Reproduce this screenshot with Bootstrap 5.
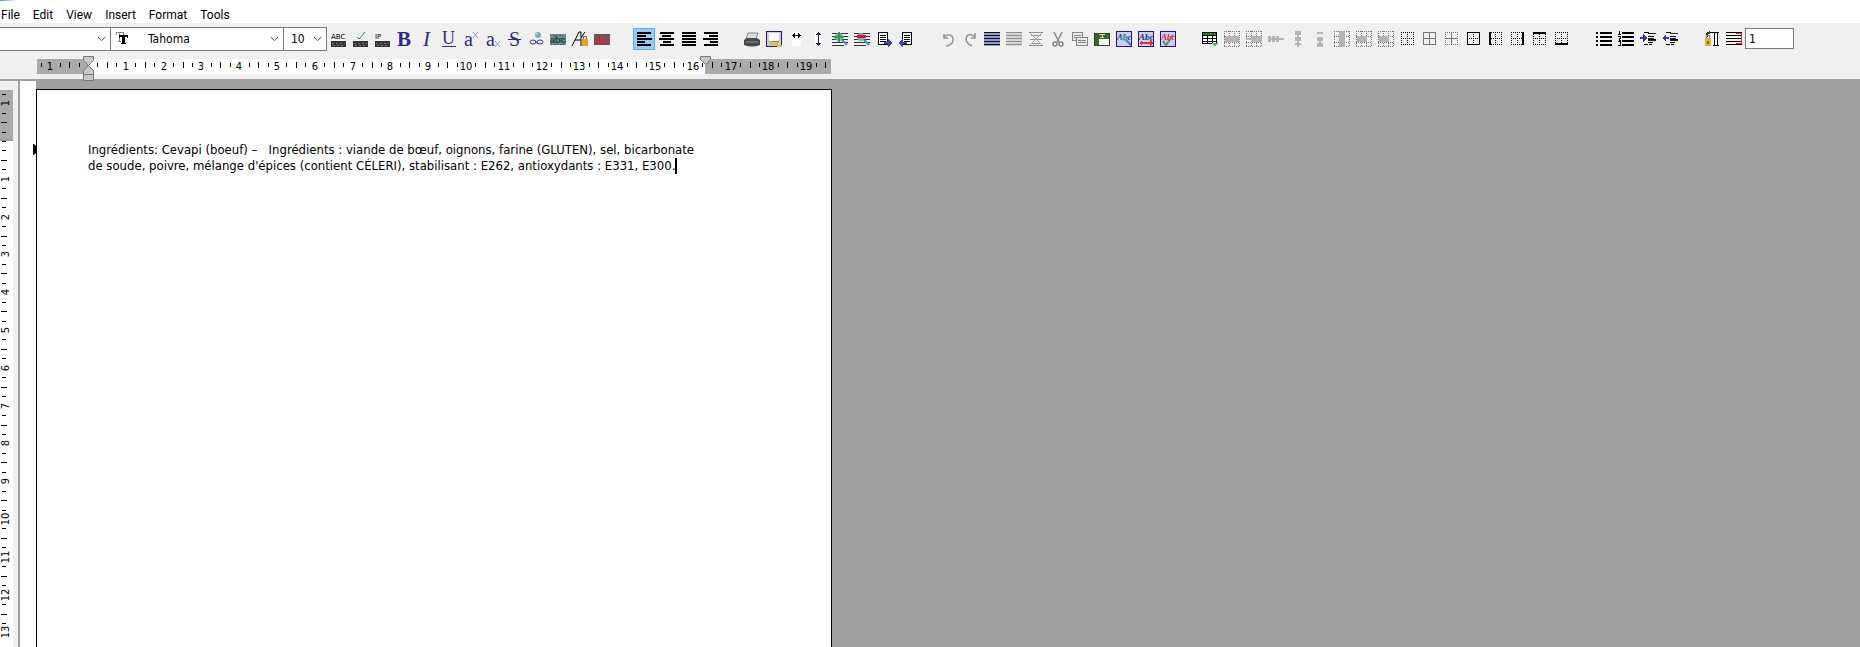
<!DOCTYPE html>
<html lang="fr">
<head>
<meta charset="utf-8">
<meta name="viewport" content="width=device-width, initial-scale=1">
<title>Editor</title>
<link href="https://cdn.jsdelivr.net/npm/bootstrap@5.3.0/dist/css/bootstrap.min.css" rel="stylesheet">
<style>
  :root { --face: #f0f0f0; --shade: #a0a0a0; --edge: #7a7a7a; --tahoma: "DejaVu Sans Condensed", "DejaVu Sans", sans-serif; }
  body { background: var(--shade); color: #000; font: 12px/16px Roboto, "Open Sans", sans-serif; }
  .menubar { height: 23px; padding: 7px 0 0 1px; gap: 13px; }
  .menubar::before { content: ""; position: absolute; top: 0; left: 0; width: 18px; height: 1px; background: linear-gradient(90deg, #4a9be8, #fff); }
  .menubar a { color: #000; line-height: 16px; }
  .chrome { background: var(--face); border-bottom: 2px solid var(--shade); }
  .toolbar-row { height: 33px; padding-top: 4px; }
  .combo { appearance: none; height: 24px; border: 1px solid var(--edge); border-radius: 0; color: #000; font: 12px/16px var(--tahoma);
    background: #fff url("data:image/svg+xml,%3Csvg xmlns='http://www.w3.org/2000/svg' width='9' height='6'%3E%3Cpath d='M.5 .7l4 4 4-4' fill='none' stroke='%23555'/%3E%3C/svg%3E") no-repeat right 4px center; }
  .combo-style { width: 111px; border-left: 0; }
  .combo-font { width: 174px; margin-left: -1px; padding-left: 37px; }
  .combo-size { width: 44px; margin-left: -1px; padding-left: 7px; }
  .font-mark { position: absolute; left: 4px; top: 4px; pointer-events: none; }
  .tools { gap: 20px; padding-top: 1px; }
  .tool { width: 22px; height: 22px; padding: 2px; border: 1px solid transparent; background: none; line-height: 0; }
  .tool:hover, .tool.active { background: #99c9ef; border-color: #56b0fa; }
  .tool svg { width: 16px; height: 16px; overflow: visible; display: block; }
  .page-number { width: 49px; height: 21px; margin-top: 1px; padding: 0 0 0 3px; border: 1px solid var(--edge); font: 12px/16px var(--tahoma); }
  .ruler-row { height: 23px; padding-left: 37px; }
  .ruler { display: block; overflow: visible; font: 11px var(--tahoma); }
  .side-ruler { width: 20px; padding-top: 9px; background: var(--face); border-right: 2px solid var(--shade); }
  .selection-bar { width: 16px; }
  .sheet { width: 796px; margin-top: 8px; border: 1px solid #000; border-bottom: 0; padding: 52px 51px; font: 13px/16px var(--tahoma); }
  .para-mark { position: absolute; left: -4px; top: 54px; }
  .caret { display: inline-block; width: 2px; height: 16px; background: #000; vertical-align: top; }
</style>
</head>
<body class="vh-100 d-flex flex-column overflow-hidden">
<nav class="menubar d-flex bg-white position-relative" aria-label="Menu">
  <a class="text-decoration-none" href="#">File</a>
  <a class="text-decoration-none" href="#">Edit</a>
  <a class="text-decoration-none" href="#">View</a>
  <a class="text-decoration-none" href="#">Insert</a>
  <a class="text-decoration-none" href="#">Format</a>
  <a class="text-decoration-none" href="#">Tools</a>
</nav>
<header class="chrome">
  <div class="toolbar-row d-flex align-items-start">
    <select class="combo combo-style" aria-label="Style"><option></option></select>
    <div class="position-relative">
      <select class="combo combo-font" aria-label="Font"><option>Tahoma</option></select>
      <svg class="font-mark" width="13" height="15" viewBox="0 0 13 15" shape-rendering="crispEdges"><path d="M1.5 4V1.5h7V4M4.5 1v9M3 10.5h3" fill="none" stroke="#888"/><path d="M4 4h9v3h-1V6h-2v6h1v1H6v-1h1V6H5v1H4z"/></svg>
    </div>
    <select class="combo combo-size" aria-label="Font size"><option>10</option></select>
    <div class="tools d-flex" id="tools" role="toolbar" aria-label="Formatting"></div>
    <input class="page-number" aria-label="Level" value="1">
  </div>
  <div class="ruler-row"><svg class="ruler" id="ruler-x" width="794" height="25"></svg></div>
</header>
<main class="d-flex flex-grow-1 overflow-hidden">
  <div class="side-ruler flex-shrink-0 overflow-hidden"><svg class="ruler w-100 h-100" id="ruler-y"></svg></div>
  <div class="selection-bar bg-white flex-shrink-0"></div>
  <article class="sheet bg-white position-relative flex-shrink-0" contenteditable="true" spellcheck="false" aria-label="Document">
    <svg class="para-mark" width="3" height="11"><path d="M0 0h1l2 2v7l-2 2H0z"/></svg>
    <p class="m-0 text-nowrap">Ingrédients: Cevapi (boeuf) – &nbsp; Ingrédients : viande de bœuf, oignons, farine (GLUTEN), sel, bicarbonate<br>de soude, poivre, mélange d'épices (contient CÉLERI), stabilisant : E262, antioxydants : E331, E300.<span class="caret"></span></p>
  </article>
</main>
<script>
  const path = (d, stroke = '#000', extra = '') => `<path d="${d}" fill="none" stroke="${stroke}" ${extra}/>`;
  const fill = (d, color = '#000') => `<path d="${d}" fill="${color}"/>`;
  const glyph = (t, x, y, size, css = '', color = '#312a80') => `<text x="${x}" y="${y}" fill="${color}" style="font:${css} ${size}px 'Liberation Serif',serif">${t}</text>`;
  const dots = 'stroke-dasharray="1 1"';
  const smooth = 'shape-rendering="auto"';

  // Keyboard-like field block
  const field = fill('M0 10h15v6H0z', '#333') + path('M1 12.5h13M2 14.5h12', '#777', 'stroke-dasharray="2 2"');
  const tiny = t => `<text x="0" y="8" style="font:7px 'DejaVu Sans',sans-serif">${t}</text>`;
  const noisy = (bg, ink) => fill('M0 3h16v11H0z', bg) + path('M0 4.5h16M1 7.5h15M0 10.5h16M1 13.5h15', '#555', 'stroke-dasharray="1 2 2 1"') +
    `<text x="0" y="12" fill="${ink}" style="font:bold 9px 'Liberation Sans',sans-serif">abc</text>`;
  const bars = rows => fill(rows.map(([y, x, w]) => `M${x} ${y}h${w}v2H${x}z`).join(''));
  const aligned = kind => bars([1, 4, 7, 10, 13].map((y, i) => {
    const w = kind === 'justify' ? 14 : [14, 9, 15, 8, 14][i];
    return [y, kind === 'left' ? 1 : kind === 'center' ? 9 - Math.ceil(w / 2) : kind === 'right' ? 16 - w : 2, w];
  }));
  const magnifier = (c, sign) => path('M0 2.5h16M0 5.5h16M0 8.5h16M0 11.5h16M0 14.5h12', '#333') + `<circle cx="7" cy="6" r="4" fill="#74afb9" ${smooth}/>` + path('M10 9l5 5', '#3f91bd', 'stroke-width="2" ' + smooth) + fill(sign, c);
  const sheetLines = fill('M1 1h10v13H1z', '#fff') + path('M1.5 1.5h9v12h-9zM3 4.5h6M3 6.5h6M3 8.5h6M3 10.5h6');
  const list = () => [1, 4, 7, 10, 13].map(y => `M0 ${y + .5}h16`).join('');
  const framed = body => fill('M0 0h16v16H0z', '#cbcbff') + body + path('M.5 .5h15v15H.5z', '#2d106f');
  const abc = (c = '#253f58') => glyph('Abc', 1, 9, 9, 'italic bold', c);
  const gridDots = (c = '#000') => path('M1 1.5h13M1 7.5h13M1 13.5h13M1.5 1v13M7.5 1v13M13.5 1v13', c, dots);
  const cells = band => path('M0 .5h16M0 5.5h16M0 11.5h16M0 15.5h16M.5 0v16M5.5 0v16M10.5 0v16M15.5 0v16', '#777', dots) + fill(band, '#b4b4b4');
  const bullets = fill([1, 5, 9, 13].map(y => `M0 ${y}h2v2H0zM4 ${y}h12v2H4z`).join(''));
  const numbers = fill([1, 5, 9, 13].map(y => `M4 ${y}h12v2H4z`).join('')) + path('M1.5 0v4M0 3.5h3M0 5.5h2v2H1v2h2M0 10.5h2v4H0', '#000');
  const indent = path('M4 1.5h5M8 2.5h8M8 5.5h6M8 8.5h8M8 11.5h5M4 13.5h4M9 13.5h3', '#000') + path('M8 2h8M8 7h6M8 9h8', '#222');

  const groups = [
    [
      ['Spelling field', `<g transform="translate(1 0)">${tiny('ABC') + field}</g>`],
      ['Check field', `<g transform="translate(1 0)">${path('M4 6l2 2 6-7', '#2b8b45', smooth) + field}</g>`],
      ['Insert field', `<g transform="translate(1 0)">${tiny('IP') + field}</g>`],
      ['Bold', glyph('B', 1, 15, 21, 'bold')],
      ['Italic', glyph('I', 5, 15, 21, 'italic')],
      ['Underline', glyph('U', 2, 13, 18) + path('M2 15.5h14', '#312a80')],
      ['Superscript', glyph('a', 2, 15, 20) + path('M11 1l5 6M16 1l-5 6', '#9697cd', smooth)],
      ['Subscript', glyph('a', 2, 15, 20) + path('M11 10l5 6M16 10l-5 6', '#9697cd', smooth)],
      ['Strikethrough', glyph('S', 3, 15, 20) + path('M2 8.5h13', '#312a80')],
      ['Hyperlink', `<g ${smooth}><circle cx="10" cy="4" r="3" fill="#6eb1bd"/><circle cx="9" cy="3" r="1" fill="#ded86e"/><ellipse cx="5" cy="11" rx="3" ry="2" fill="none" stroke="#39398c"/><ellipse cx="12" cy="11" rx="3" ry="2" fill="none" stroke="#39398c"/><path d="M6 9l4 4" stroke="#39398c"/></g>`],
      ['Highlight', noisy('#6b8f8f', '#243f45')],
      ['Protect text', path('M0 15L7 1h2v14M3 9h6M9 7l4-6', '#000', smooth) + fill('M10 8h6v7h-6z', '#e5a51f') + path('M11.5 8V5.5h3V8', '#666')],
      ['Hidden text', noisy('#625a5a', '#e3222b')],
    ],
    [
      ['Align left', aligned('left'), 'active'], ['Center', aligned('center')], ['Justify', aligned('justify')], ['Align right', aligned('right')],
    ],
    [
      ['Print', `<g ${smooth}><path d="M4 2h10l-2 6H2z" fill="#ddd" stroke="#888"/><path d="M0 9l3-2h10l3 2v5q-8 3-16 0z" fill="#454b4d"/><path d="M2 11h12" stroke="#8c9292"/></g>`],
      ['Page setup', fill('M0 0h16v16H0z', '#c9c9f8') + path('M.5 .5h15v15H.5z', '#2d106f') + fill('M3 2h10v8H3z', '#fff') + path('M3 10h10', '#777') + path('M4 13h6l2-2m-2 2l2 2h4M5 10v4', '#d8c51f', 'stroke-width="2"')],
      ['Page width', fill('M4 1h9v14H4z', '#fff') + path('M5 4.5h7M6.5 2v5M10.5 2v5') + fill('M4 4.5l3-3v6zM13 4.5l-3-3v6z')],
      ['Page height', fill('M5 1h7v14H5z', '#fff') + path('M8.5 3v10', '#202060') + fill('M8.5 1L6 4h5zM8.5 15L6 12h5z', '#202060')],
      ['Zoom in', magnifier('#2c9d4c', 'M6 1h2v4h4v2H8v4H6V7H2V5h4z')],
      ['Zoom out', magnifier('#cf1534', 'M3 4h9v3H3z')],
      ['Next page', `<g transform="translate(1 0)">${sheetLines + fill('M7 11h4V8l5 4-5 4v-3H7z', '#4040ba')}</g>`],
      ['Previous page', `<g transform="translate(3 0)">${sheetLines}</g>` + fill('M9 11H5V8l-5 4 5 4v-3h4z', '#4040ba')],
    ],
    [
      ['Undo', path('M4 3v4h4M4 6c8-8 15 7 2 9', '#929292', 'stroke-width="1.5" ' + smooth)],
      ['Redo', path('M13 2v5H9M13 6C4-2 0 12 10 15', '#929292', 'stroke-width="1.5" ' + smooth)],
      ['Select rows', fill('M0 1h16v14H0z', '#9999d8') + path(list(), '#111')],
      ['Lines', fill('M0 1h16v14H0z', '#d4d4d4') + path(list(), '#909090')],
      ['Delete lines', path('M1 1.5h14M3 4.5h10M2 8.5h12M3 12.5h10M1 14.5h14', '#929292') + path('M2 2l12 12M14 2L2 14', '#a4a4a4', smooth)],
      ['Cut', `<g fill="none" stroke="#858585" stroke-width="1.5" ${smooth}><path d="M4 1l5 10M12 1L7 11"/><circle cx="5" cy="13" r="2"/><circle cx="11" cy="13" r="2"/></g>`],
      ['Copy', fill('M0 1h11v9H0z', '#e8e8e8') + path('M.5 1.5h10v8H.5zM2 4.5h7M2 6.5h7', '#858585') + fill('M4 6h12v9H4z', '#e8e8e8') + path('M4.5 6.5h11v8h-11zM6 9.5h8M6 11.5h8', '#858585')],
      ['Paste', fill('M0 2h16v13H0z', '#2e6931') + path('M.5 2.5h15v12H.5z', '#29452a') + path('M5 3.5h6M8.5 3v3M6 6.5h4', '#ecd36c') + fill('M5 8h10v6H5z', '#fff')],
      ['Find', framed(abc() + `<circle cx="8" cy="7" r="3" fill="#71b3c1" fill-opacity=".7" ${smooth}/>` + path('M10 9l5 5', '#398cb9', 'stroke-width="2" ' + smooth))],
      ['Replace', framed(abc('#203a45') + fill('M1 12l3-3v2h8V9l3 3-3 3v-2H4v2z', '#dc3032') + path('M10 6l4 3', '#398cb9', 'stroke-width="2"'))],
      ['Check spelling', framed(abc('#fa1b25') + path('M3 10l3 4L13 4', '#71854b', 'stroke-width="2" ' + smooth))],
    ],
    [
      ['Insert table', fill('M0 1h15v12H0z', '#fff') + fill('M0 1h15v3H0z', '#278527') + path('M.5 1.5h14v11H.5zM0 4.5h15M0 7.5h15M0 10.5h15M5.5 4v9M10.5 4v9') + fill('M10 12h6l-3 4z', '#35c963')],
      ['Insert row', cells('M1 5h14v6H1z')],
      ['Split row', cells('M5 5h11v6H5zM0 7h6v2H0z')],
      ['Delete row', fill('M0 5h3v6H0zM4 5h3v6H4zM8 5h3v6H8zM0 7h16v2H0z', '#b4b4b4')],
      ['Column below', fill('M5 0h6v4H5zM5 6h6v4H5zM7 0h2v16H7zM5 12h6v2H5z', '#b4b4b4')],
      ['Column above', fill('M5 1h6v2H5zM5 6h6v4H5zM5 12h6v4H5zM7 6h2v9H7z', '#b4b4b4')],
      ['Insert column', cells('M5 0h6v16H5z')],
      ['Merge cells', cells('M1 5h10v6H1z')],
      ['Split cells', cells('M1 5h10v6H1z')],
      ['No borders', gridDots()],
      ['All borders', path('M1.5 1.5h12v12h-12zM7.5 1v13M1 7.5h13', '#777')],
      ['Inner borders', gridDots('#777') + path('M7.5 1v13M1 7.5h13', '#777')],
      ['Outer borders', path('M1.5 1.5h12v12h-12z') + path('M7.5 3v10M3 7.5h10', '#000', dots)],
      ['Left border', gridDots() + fill('M1 1h2v13H1z')],
      ['Right border', gridDots() + fill('M12 1h2v13h-2z')],
      ['Top border', gridDots() + fill('M1 1h13v2H1z')],
      ['Bottom border', gridDots() + fill('M1 12h13v2H1z')],
    ],
    [
      ['Bullets', bullets], ['Numbering', numbers],
      ['Increase indent', indent + fill('M0 6h3V3l4 4-4 4V8H0z', '#3737a5')],
      ['Decrease indent', indent + fill('M7 6H4V3L0 7l4 4V8h3z', '#3737a5')],
    ],
    [
      ['Paragraph lock', path('M4 1.5h11M13.5 2v13M10.5 2v13M9 14.5h6', '#111') + path('M3 6V3l3-2', '#333', 'stroke-width="2"') + fill('M1 7h6v8H1z', '#deb12c') + path('M2.5 7V4.5h3V7', '#777') + fill('M3 10h2v3H3z', '#806a18')],
      ['Paragraph level', path('M0 1.5h16M0 4.5h16M0 7.5h16M0 10.5h16M0 13.5h16') + path('M10 2.5h5v10h-5', '#dc3032')],
    ],
  ];
  document.getElementById('tools').innerHTML = groups.map(g => '<div class="d-flex">' + g.map(([name, art, state = '']) =>
    `<button type="button" class="tool ${state}" aria-label="${name}"><svg viewBox="0 0 16 16" shape-rendering="crispEdges">${art}</svg></button>`).join('') + '</div>').join('');

  // Rulers: one centimetre at 96 dpi, marked in quarters
  const CM = 37.8;
  function ticks(from, to, origin, vertical) {
    let out = '';
    for (let q = from; q <= to; q++) {
      const p = Math.round(origin + q * CM / 4), n = Math.abs(q / 4);
      if (q % 4 === 0 && q) {
        out += vertical ? `<text transform="translate(9 ${p}) rotate(-90)" text-anchor="middle">${n}</text>`
                        : `<text x="${p}" y="14" text-anchor="middle">${n}</text>`;
      } else {
        const long = q % 2 === 0 && q, a = long ? 1 : 2, len = long ? 6 : 4;
        out += vertical ? `<rect x="${a}" y="${p}" width="${len}" height="1"/>` : `<rect x="${p}" y="${a + 5}" width="1" height="${len}"/>`;
      }
    }
    return out;
  }
  const knob = 'fill="#c8c8c8" stroke="#7a7a7a"';
  document.getElementById('ruler-x').innerHTML =
    '<rect y="3" width="794" height="15" fill="#aaa"/><rect x="51" y="3" width="617" height="15" fill="#fff"/>' + ticks(-5, 78, 51, false) +
    `<path ${knob} d="M46.5 .5h10v4l-5 5-5-5z"/><path ${knob} d="M46.5 18.5v-4l5-5 5 5v4z"/><path ${knob} d="M46.5 18.5h10v6h-10z"/><path ${knob} d="M663.5 .5h10v3l-5 5-5-5z"/>`;

  const side = document.getElementById('ruler-y');
  function drawSide() {
    const last = Math.floor((side.parentElement.clientHeight - 9 - 51 - 8) * 4 / CM);
    side.innerHTML = '<rect width="13" height="100%" fill="#fff"/><rect width="13" height="50" fill="#aaa"/><rect y="49" width="13" height="2" fill="#999"/>' + ticks(-5, last, 51, true);
  }
  drawSide();
  addEventListener('resize', drawSide);
</script>
<script src="https://cdn.jsdelivr.net/npm/bootstrap@5.3.0/dist/js/bootstrap.bundle.min.js"></script>
</body>
</html>
